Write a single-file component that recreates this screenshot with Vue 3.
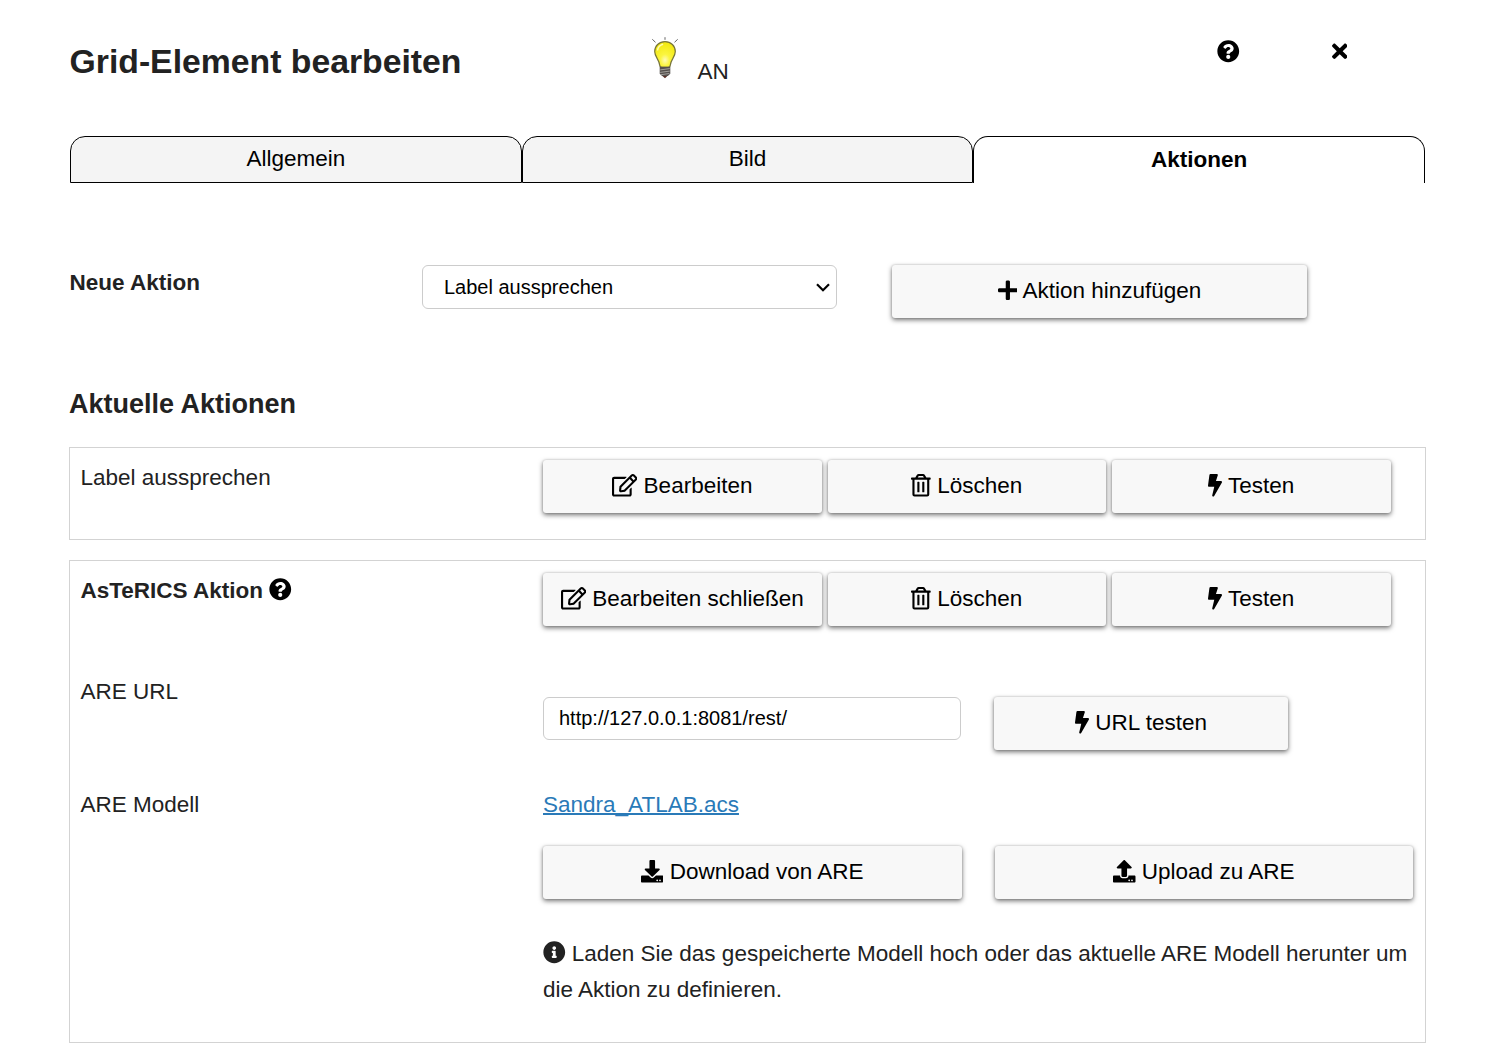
<script setup>
import { h, ref } from 'vue'

const dots =
  'zm-124 88c0-11-9-20-20-20s-20 9-20 20 9 20 20 20 20-9 20-20zm64 0c0-11-9-20-20-20s-20 9-20 20 9 20 20 20 20-9 20-20z'

const icons = {
  help: [512, 'M504 256c0 136.997-111.043 248-248 248S8 392.997 8 256C8 119.083 119.043 8 256 8s248 111.083 248 248zM262.655 90c-54.497 0-89.255 22.957-116.549 63.758-3.536 5.286-2.353 12.415 2.715 16.258l34.699 26.31c5.205 3.947 12.621 3.008 16.665-2.122 17.864-22.658 30.113-35.797 57.303-35.797 20.429 0 45.698 13.148 45.698 32.958 0 14.976-12.363 22.667-32.534 33.976C247.128 238.528 216 254.941 216 296v4c0 6.627 5.373 12 12 12h56c6.627 0 12-5.373 12-12v-1.333c0-28.462 83.186-29.647 83.186-106.667 0-58.002-60.165-102-116.531-102zM256 338c-25.365 0-46 20.635-46 46 0 25.364 20.635 46 46 46s46-20.636 46-46c0-25.365-20.635-46-46-46z'],
  close: [352, 'M242.72 256l100.07-100.07c12.28-12.28 12.28-32.19 0-44.48l-22.24-22.24c-12.28-12.28-32.19-12.28-44.48 0L176 189.28 75.93 89.21c-12.28-12.28-32.19-12.28-44.48 0L9.21 111.45c-12.28 12.28-12.28 32.19 0 44.48L109.28 256 9.21 356.07c-12.28 12.28-12.28 32.19 0 44.48l22.24 22.24c12.28 12.28 32.2 12.28 44.48 0L176 322.72l100.07 100.07c12.28 12.28 32.2 12.28 44.48 0l22.24-22.24c12.28-12.28 12.28-32.19 0-44.48L242.72 256z'],
  plus: [448, 'M416 208H272V64c0-17.67-14.33-32-32-32h-32c-17.67 0-32 14.33-32 32v144H32c-17.67 0-32 14.33-32 32v32c0 17.67 14.33 32 32 32h144v144c0 17.67 14.33 32 32 32h32c17.67 0 32-14.33 32-32V304h144c17.67 0 32-14.33 32-32v-32c0-17.67-14.33-32-32-32z'],
  edit: [576, 'M402.3 344.9l32-32c5-5 13.7-1.5 13.7 5.7V464c0 26.5-21.5 48-48 48H48c-26.5 0-48-21.5-48-48V112c0-26.5 21.5-48 48-48h273.5c7.1 0 10.7 8.6 5.7 13.7l-32 32c-1.5 1.5-3.5 2.3-5.7 2.3H48v352h352V350.5c0-2.1.8-4.1 2.3-5.6zm156.6-201.8L296.3 405.7l-90.4 10c-26.2 2.9-48.5-19.2-45.6-45.6l10-90.4L432.9 17.1c22.9-22.9 59.9-22.9 82.7 0l43.2 43.2c22.9 22.9 22.9 60 .1 82.8zM460.1 174L402 115.9 216.2 301.8l-7.3 65.3 65.3-7.3L460.1 174zm64.8-79.7l-43.2-43.2c-4.1-4.1-10.8-4.1-14.8 0L436 82l58.1 58.1 30.9-30.9c4-4.2 4-10.8-.1-14.9z'],
  trash: [448, 'M268 416h24a12 12 0 0 0 12-12V188a12 12 0 0 0-12-12h-24a12 12 0 0 0-12 12v216a12 12 0 0 0 12 12zM432 80h-82.41l-34-56.7A48 48 0 0 0 274.41 0H173.59a48 48 0 0 0-41.16 23.3L98.41 80H16A16 16 0 0 0 0 96v16a16 16 0 0 0 16 16h16v336a48 48 0 0 0 48 48h288a48 48 0 0 0 48-48V128h16a16 16 0 0 0 16-16V96a16 16 0 0 0-16-16zM171.84 50.91A6 6 0 0 1 177 48h94a6 6 0 0 1 5.15 2.91L293.61 80H154.39zM368 464H80V128h288zm-212-48h24a12 12 0 0 0 12-12V188a12 12 0 0 0-12-12h-24a12 12 0 0 0-12 12v216a12 12 0 0 0 12 12z'],
  bolt: [320, 'M296 160H180.6l42.6-129.8C227.2 15 215.7 0 200 0H56C44 0 33.8 8.9 32.2 20.8l-32 240C-1.7 275.2 9.5 288 24 288h118.7L96.6 482.5c-3.6 15.2 8 29.5 23.3 29.5 8.4 0 16.4-4.4 20.8-12l176-304c9.3-15.9-2.2-36-20.7-36z'],
  download: [512, 'M216 0h80c13.3 0 24 10.7 24 24v168h87.7c17.8 0 26.7 21.5 14.1 34.1L269.7 378.3c-7.5 7.5-19.8 7.5-27.3 0L90.1 226.1c-12.6-12.6-3.7-34.1 14.1-34.1H192V24c0-13.3 10.7-24 24-24zm296 376v112c0 13.3-10.7 24-24 24H24c-13.3 0-24-10.7-24-24V376c0-13.3 10.7-24 24-24h146.7l49 49c20.1 20.1 52.5 20.1 72.6 0l49-49H488c13.3 0 24 10.7 24 24' + dots],
  upload: [512, 'M296 384h-80c-13.3 0-24-10.7-24-24V192h-87.7c-17.8 0-26.7-21.5-14.1-34.1L242.3 5.7c7.5-7.5 19.8-7.5 27.3 0l152.2 152.2c12.6 12.6 3.7 34.1-14.1 34.1H320v168c0 13.3-10.7 24-24 24zm216-8v112c0 13.3-10.7 24-24 24H24c-13.3 0-24-10.7-24-24V376c0-13.3 10.7-24 24-24h136v8c0 30.9 25.1 56 56 56h80c30.9 0 56-25.1 56-56v-8h136c13.3 0 24 10.7 24 24' + dots],
  info: [512, 'M256 8C119.043 8 8 119.083 8 256c0 136.997 111.043 248 248 248s248-111.003 248-248C504 119.083 392.957 8 256 8zm0 110c23.196 0 42 18.804 42 42s-18.804 42-42 42-42-18.804-42-42 18.804-42 42-42zm56 254c0 6.627-5.373 12-12 12h-88c-6.627 0-12-5.373-12-12v-24c0-6.627 5.373-12 12-12h12v-64h-12c-6.627 0-12-5.373-12-12v-24c0-6.627 5.373-12 12-12h64c6.627 0 12 5.373 12 12v100h12c6.627 0 12 5.373 12 12v24z'],
}

const Icon = (props) =>
  h(
    'svg',
    {
      viewBox: `0 0 ${icons[props.name][0]} 512`,
      width: (icons[props.name][0] / 512) * 22.5,
      height: 22.5,
      fill: 'currentColor',
      'aria-hidden': 'true',
    },
    [h('path', { d: icons[props.name][1] })]
  )
Icon.props = ['name']

const tabs = ['Allgemein', 'Bild', 'Aktionen']
const activeTab = ref('Aktionen')
const url = ref('http://127.0.0.1:8081/rest/')
const actionButtons = (editLabel) => [
  { icon: 'edit', label: editLabel },
  { icon: 'trash', label: 'Löschen' },
  { icon: 'bolt', label: 'Testen' },
]
</script>

<template>
  <main class="dialog">
    <header class="header">
      <h1>Grid-Element bearbeiten</h1>
      <div class="hint">
        <svg class="bulb" viewBox="0 0 28 42" width="28" height="42">
          <defs>
            <radialGradient id="glow" cx="50%" cy="72%" r="65%">
              <stop offset="0" stop-color="#fffbb8" />
              <stop offset=".35" stop-color="#fbf540" />
              <stop offset="1" stop-color="#f3ea12" />
            </radialGradient>
          </defs>
          <path d="M1.300 2.300l3.200 3M14 .2v2.600M26.700 2.300l-3.200 3" stroke="#666" stroke-width="1" fill="none" />
          <path d="M14 4.600C8 4.600 3.700 9 3.700 14.600c0 5.200 4.200 7.400 5 13.500.2 1.600 1 2.200 2.200 2.200h6.200c1.200 0 2-.6 2.200-2.200.8-6.100 5-8.300 5-13.500 0-5.600-4.300-10-10.300-10z" fill="url(#glow)" stroke="#77753a" stroke-width="1.200" />
          <path d="M6.500 13.500c.4-3.500 2.600-5.600 5.600-6.300" fill="none" stroke="#fffbb0" stroke-width="1.500" />
          <path d="M8.700 29.800h10.600v7l-2.400 2.300h-5.800l-2.400-2.300z" fill="#55504d" />
          <path d="M9.200 32.900l9.600-1.300M9.200 35.400l9.600-1.300M9.900 37.700l8.500-1.200" stroke="#b5b2af" stroke-width=".8" />
          <path d="M11.400 39h5L14 41.300z" fill="#5a3028" />
        </svg>
        <span>AN</span>
      </div>
      <a class="head-icon"><Icon name="help" /></a>
      <a class="head-icon"><Icon name="close" /></a>
    </header>

    <nav class="tabs">
      <button v-for="tab in tabs" :key="tab" :class="['tab', { active: tab === activeTab }]" @click="activeTab = tab">{{ tab }}</button>
    </nav>

    <section class="new-action">
      <label>Neue Aktion</label>
      <div class="select">
        <span>Label aussprechen</span>
        <svg width="14" height="9" viewBox="0 0 14 9"><path d="M1 1.200l6 6 6-6" fill="none" stroke="#000" stroke-width="2.200" /></svg>
      </div>
      <button class="btn add"><Icon name="plus" />{{ ' Aktion hinzufügen' }}</button>
    </section>

    <h2>Aktuelle Aktionen</h2>

    <section class="card">
      <div class="row">
        <span class="label">Label aussprechen</span>
        <div class="actions">
          <button v-for="b in actionButtons('Bearbeiten')" :key="b.label" class="btn"><Icon :name="b.icon" />{{ ' ' + b.label }}</button>
        </div>
      </div>
    </section>

    <section class="card detail">
      <div class="row">
        <span class="label name">AsTeRICS Aktion <a><Icon name="help" /></a></span>
        <div class="actions">
          <button v-for="b in actionButtons('Bearbeiten schließen')" :key="b.label" class="btn"><Icon :name="b.icon" />{{ ' ' + b.label }}</button>
        </div>
      </div>
      <div class="row url-row">
        <span class="label">ARE URL</span>
        <div class="pair">
          <input v-model="url" type="text" spellcheck="false" />
          <button class="btn test"><Icon name="bolt" />{{ ' URL testen' }}</button>
        </div>
      </div>
      <div class="row">
        <span class="label">ARE Modell</span>
        <div class="model">
          <a class="link">Sandra_ATLAB.acs</a>
          <div class="pair transfer">
            <button class="btn"><Icon name="download" />{{ ' Download von ARE' }}</button>
            <button class="btn"><Icon name="upload" />{{ ' Upload zu ARE' }}</button>
          </div>
          <p><Icon name="info" />{{ ' Laden Sie das gespeicherte Modell hoch oder das aktuelle ARE Modell herunter um die Aktion zu definieren.' }}</p>
        </div>
      </div>
    </section>
  </main>
</template>

<style>
body {
  background: #fff;
}
</style>

<style scoped>
.dialog,
.dialog * {
  box-sizing: border-box;
}
.dialog {
  width: 1507px;
  height: 1051px;
  overflow: hidden;
  padding: 0 69px;
  font: 22.5px/36px "Liberation Sans", Arial, sans-serif;
  color: #222;
}
.dialog button,
.dialog input {
  font-family: inherit;
  color: #000;
}
.dialog svg {
  vertical-align: -0.125em;
}
.header {
  display: flex;
  height: 136px;
}
.header > * {
  flex: none;
}
h1 {
  width: 582px;
  margin: 34px 0 0;
  padding-left: 0.5px;
  font-size: 33.75px;
  line-height: 54px;
}
.hint {
  display: flex;
  width: 566px;
}
.bulb {
  margin: 37px 18.5px 0 0;
}
.hint span {
  margin-top: 54px;
}
.head-icon {
  width: 115px;
  padding-top: 35px;
  color: #000;
}
.tabs {
  display: flex;
  width: 1355px;
  margin-left: 1px;
}
.tab {
  flex: 1;
  height: 47px;
  padding: 0 0 1px;
  border: 1px solid #000;
  border-radius: 15px 15px 0 0;
  background: #f4f4f4;
  font-size: 22.5px;
}
.tab.active {
  border-bottom: 0;
  background: #fff;
  font-weight: bold;
}
.new-action {
  display: flex;
  align-items: flex-start;
  height: 120px;
  margin: 82px 0 0 0.5px;
}
.new-action label {
  width: 352.5px;
  font-weight: bold;
}
.select {
  display: flex;
  align-items: center;
  justify-content: space-between;
  width: 415px;
  height: 44px;
  margin-right: 55px;
  padding: 0 6px 0 21px;
  border: 1px solid #ccc;
  border-radius: 6px;
  font-size: 20px;
  color: #000;
}
.btn {
  height: 53px;
  padding: 0 0 1px;
  border: 0;
  border-radius: 3px;
  background: #f8f8f8;
  box-shadow: 0 2px 5px rgba(0, 0, 0, 0.55), 0 0 2px rgba(0, 0, 0, 0.2);
  font-size: 22.5px;
  line-height: 36px;
  white-space: nowrap;
}
.dialog .btn svg {
  vertical-align: -3.5px;
}
.add {
  width: 415px;
}
h2 {
  margin: -2px 0 21px;
  font-size: 27px;
  line-height: 43px;
}
.card {
  width: 1357px;
  height: 93px;
  margin-bottom: 20px;
  padding: 11px 10.5px 0;
  border: 1px solid #d3d3d3;
}
.row {
  display: flex;
}
.label {
  flex: none;
  width: 462.5px;
  margin-top: 1px;
}
.name {
  font-weight: bold;
}
.name a {
  color: #000;
}
.actions {
  display: flex;
  gap: 6px;
  margin-top: 1px;
}
.actions .btn {
  width: 278.5px;
}
.detail {
  height: 483px;
}
.url-row {
  height: 113px;
  margin-top: 47px;
}
.pair {
  display: flex;
  align-items: flex-start;
  gap: 33px;
}
.url-row .pair {
  margin-top: 24px;
}
input {
  width: 418px;
  height: 43px;
  padding: 0 15px 1px;
  border: 1px solid #ccc;
  border-radius: 6px;
  font-size: 20px;
}
.test {
  width: 294px;
}
.model {
  width: 872px;
}
.link {
  display: block;
  width: max-content;
  margin-top: 1px;
  color: #2a7ab8;
  text-decoration: underline;
  text-decoration-thickness: 2px;
}
.transfer {
  margin-top: 23px;
}
.transfer .btn {
  width: 418.5px;
}
p {
  margin: 37px 0 0;
}
</style>
